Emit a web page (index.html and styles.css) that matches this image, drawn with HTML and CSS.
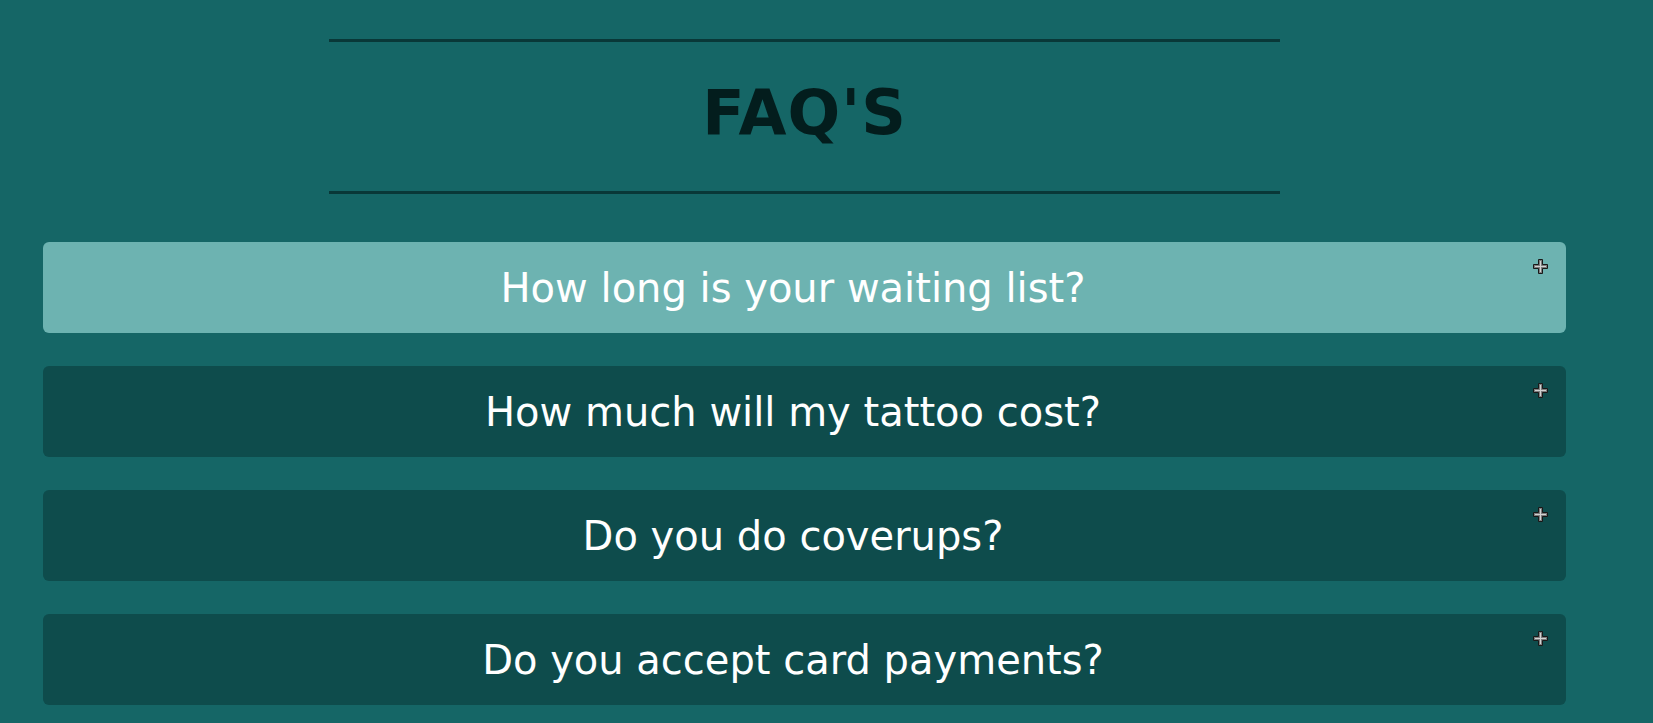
FILE: index.html
```html
<!DOCTYPE html>
<html lang="en">
<head>
<meta charset="utf-8">
<title>FAQ's</title>
<link rel="stylesheet" href="styles.css">
</head>
<body>
<section class="faq">
  <header class="faq-head">
    <h1 class="faq-title">FAQ'S</h1>
  </header>
  <div class="faq-list">
    <button class="faq-item faq-item--active">How long is your waiting list?<svg class="plus" viewBox="0 0 15 15" width="15" height="15"><polygon points="5.5,0.5 9.5,0.5 9.5,5.5 14.5,5.5 14.5,9.5 9.5,9.5 9.5,14.5 5.5,14.5 5.5,9.5 0.5,9.5 0.5,5.5 5.5,5.5" fill="#7d7d7d" stroke="#181818" stroke-width="1"/><path d="M7.5 2V13M2 7.5H13" stroke="#d2d2d2" stroke-width="1"/></svg></button>
    <button class="faq-item">How much will my tattoo cost?<svg class="plus" viewBox="0 0 15 15" width="15" height="15"><polygon points="5.5,0.5 9.5,0.5 9.5,5.5 14.5,5.5 14.5,9.5 9.5,9.5 9.5,14.5 5.5,14.5 5.5,9.5 0.5,9.5 0.5,5.5 5.5,5.5" fill="#7d7d7d" stroke="#181818" stroke-width="1"/><path d="M7.5 2V13M2 7.5H13" stroke="#d2d2d2" stroke-width="1"/></svg></button>
    <button class="faq-item">Do you do coverups?<svg class="plus" viewBox="0 0 15 15" width="15" height="15"><polygon points="5.5,0.5 9.5,0.5 9.5,5.5 14.5,5.5 14.5,9.5 9.5,9.5 9.5,14.5 5.5,14.5 5.5,9.5 0.5,9.5 0.5,5.5 5.5,5.5" fill="#7d7d7d" stroke="#181818" stroke-width="1"/><path d="M7.5 2V13M2 7.5H13" stroke="#d2d2d2" stroke-width="1"/></svg></button>
    <button class="faq-item">Do you accept card payments?<svg class="plus" viewBox="0 0 15 15" width="15" height="15"><polygon points="5.5,0.5 9.5,0.5 9.5,5.5 14.5,5.5 14.5,9.5 9.5,9.5 9.5,14.5 5.5,14.5 5.5,9.5 0.5,9.5 0.5,5.5 5.5,5.5" fill="#7d7d7d" stroke="#181818" stroke-width="1"/><path d="M7.5 2V13M2 7.5H13" stroke="#d2d2d2" stroke-width="1"/></svg></button>
  </div>
</section>
</body>
</html>
```

FILE: styles.css
```css
html, body {
  margin: 0;
  padding: 0;
  background: #156666;
  height: 100%;
  overflow: hidden;
}

body {
  font-family: "DejaVu Sans", "Liberation Sans", sans-serif;
}

.faq {
  padding: 39px 87px 0 43px;
}

.faq-head {
  width: 951px;
  margin: 0 auto;
  border-top: 3px solid #093838;
  border-bottom: 3px solid #093838;
  padding: 36px 0 43px;
  text-align: center;
}

.faq-title {
  margin: 0;
  font-family: "DejaVu Sans", sans-serif;
  font-weight: 700;
  font-size: 62px;
  line-height: 70px;
  letter-spacing: 1px;
  color: #031d1d;
}

.faq-list {
  margin-top: 48px;
  display: flex;
  flex-direction: column;
  gap: 33px;
}

.faq-item {
  position: relative;
  display: block;
  width: 100%;
  height: 91px;
  border: 0;
  border-radius: 6px;
  background: #0e4c4c;
  color: #ffffff;
  font-family: "DejaVu Sans", sans-serif;
  font-weight: 400;
  font-size: 40px;
  text-align: center;
  padding: 0 48px 0 25px;
  margin: 0;
  cursor: pointer;
}

.faq-item--active {
  background: #6db3b1;
}

.plus {
  position: absolute;
  top: 17px;
  right: 18px;
  display: block;
}
```
